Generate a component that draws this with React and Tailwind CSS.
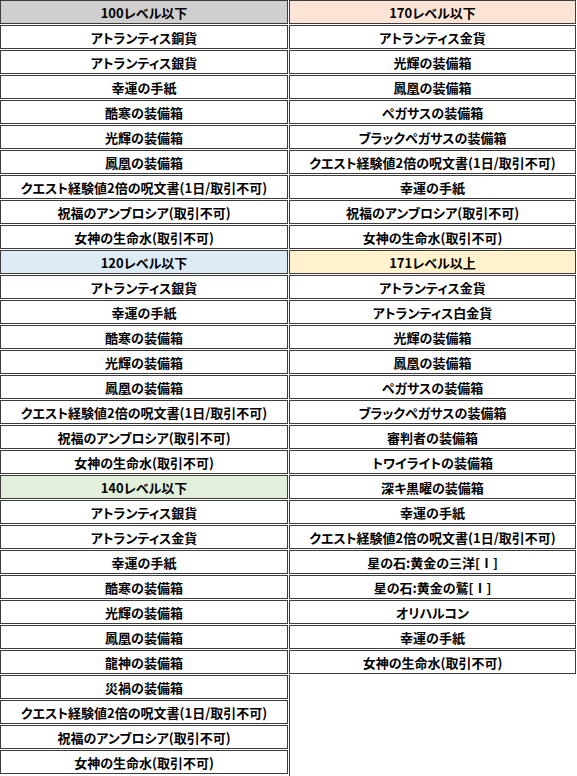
import React from 'react';

const groupsLeft = [
  {
    title: '100レベル以下',
    color: 'bg-[#d0cece]',
    items: [
      'アトランティス銅貨',
      'アトランティス銀貨',
      '幸運の手紙',
      '酷寒の装備箱',
      '光輝の装備箱',
      '鳳凰の装備箱',
      'クエスト経験値2倍の呪文書(1日/取引不可)',
      '祝福のアンブロシア(取引不可)',
      '女神の生命水(取引不可)',
    ],
  },
  {
    title: '120レベル以下',
    color: 'bg-[#ddebf7]',
    items: [
      'アトランティス銀貨',
      '幸運の手紙',
      '酷寒の装備箱',
      '光輝の装備箱',
      '鳳凰の装備箱',
      'クエスト経験値2倍の呪文書(1日/取引不可)',
      '祝福のアンブロシア(取引不可)',
      '女神の生命水(取引不可)',
    ],
  },
  {
    title: '140レベル以下',
    color: 'bg-[#e2efda]',
    items: [
      'アトランティス銀貨',
      'アトランティス金貨',
      '幸運の手紙',
      '酷寒の装備箱',
      '光輝の装備箱',
      '鳳凰の装備箱',
      '龍神の装備箱',
      '災禍の装備箱',
      'クエスト経験値2倍の呪文書(1日/取引不可)',
      '祝福のアンブロシア(取引不可)',
      '女神の生命水(取引不可)',
    ],
  },
];

const groupsRight = [
  {
    title: '170レベル以下',
    color: 'bg-[#fce4d6]',
    items: [
      'アトランティス金貨',
      '光輝の装備箱',
      '鳳凰の装備箱',
      'ペガサスの装備箱',
      'ブラックペガサスの装備箱',
      'クエスト経験値2倍の呪文書(1日/取引不可)',
      '幸運の手紙',
      '祝福のアンブロシア(取引不可)',
      '女神の生命水(取引不可)',
    ],
  },
  {
    title: '171レベル以上',
    color: 'bg-[#fff2cc]',
    items: [
      'アトランティス金貨',
      'アトランティス白金貨',
      '光輝の装備箱',
      '鳳凰の装備箱',
      'ペガサスの装備箱',
      'ブラックペガサスの装備箱',
      '審判者の装備箱',
      'トワイライトの装備箱',
      '深キ黒曜の装備箱',
      '幸運の手紙',
      'クエスト経験値2倍の呪文書(1日/取引不可)',
      '星の石:黄金の三洋[Ⅰ]',
      '星の石:黄金の鷲[Ⅰ]',
      'オリハルコン',
      '幸運の手紙',
      '女神の生命水(取引不可)',
    ],
  },
];

const Cell = ({ children, color = 'bg-white' }) => (
  <div
    className={`h-[24px] mb-px border border-[#3c3c3c] ${color} flex items-center justify-center text-[13px] font-bold text-black leading-none whitespace-nowrap`}
  >
    {children}
  </div>
);

const Column = ({ groups }) => (
  <div className="flex flex-col">
    {groups.map((g) => (
      <React.Fragment key={g.title}>
        <Cell color={g.color}>{g.title}</Cell>
        {g.items.map((item, i) => (
          <Cell key={i}>{item}</Cell>
        ))}
      </React.Fragment>
    ))}
  </div>
);

export default function App() {
  return (
    <div
      className="w-[577px] h-[776px] bg-white flex gap-px overflow-hidden"
      style={{ fontFamily: '"Noto Sans CJK JP", "Noto Sans", sans-serif', fontFeatureSettings: '"palt"' }}
    >
      <div className="w-[288px]">
        <Column groups={groupsLeft} />
      </div>
      <div className="w-[287px] flex flex-col">
        <Column groups={groupsRight} />
        <div className="flex-1 border-l border-[#3c3c3c]" />
      </div>
    </div>
  );
}
